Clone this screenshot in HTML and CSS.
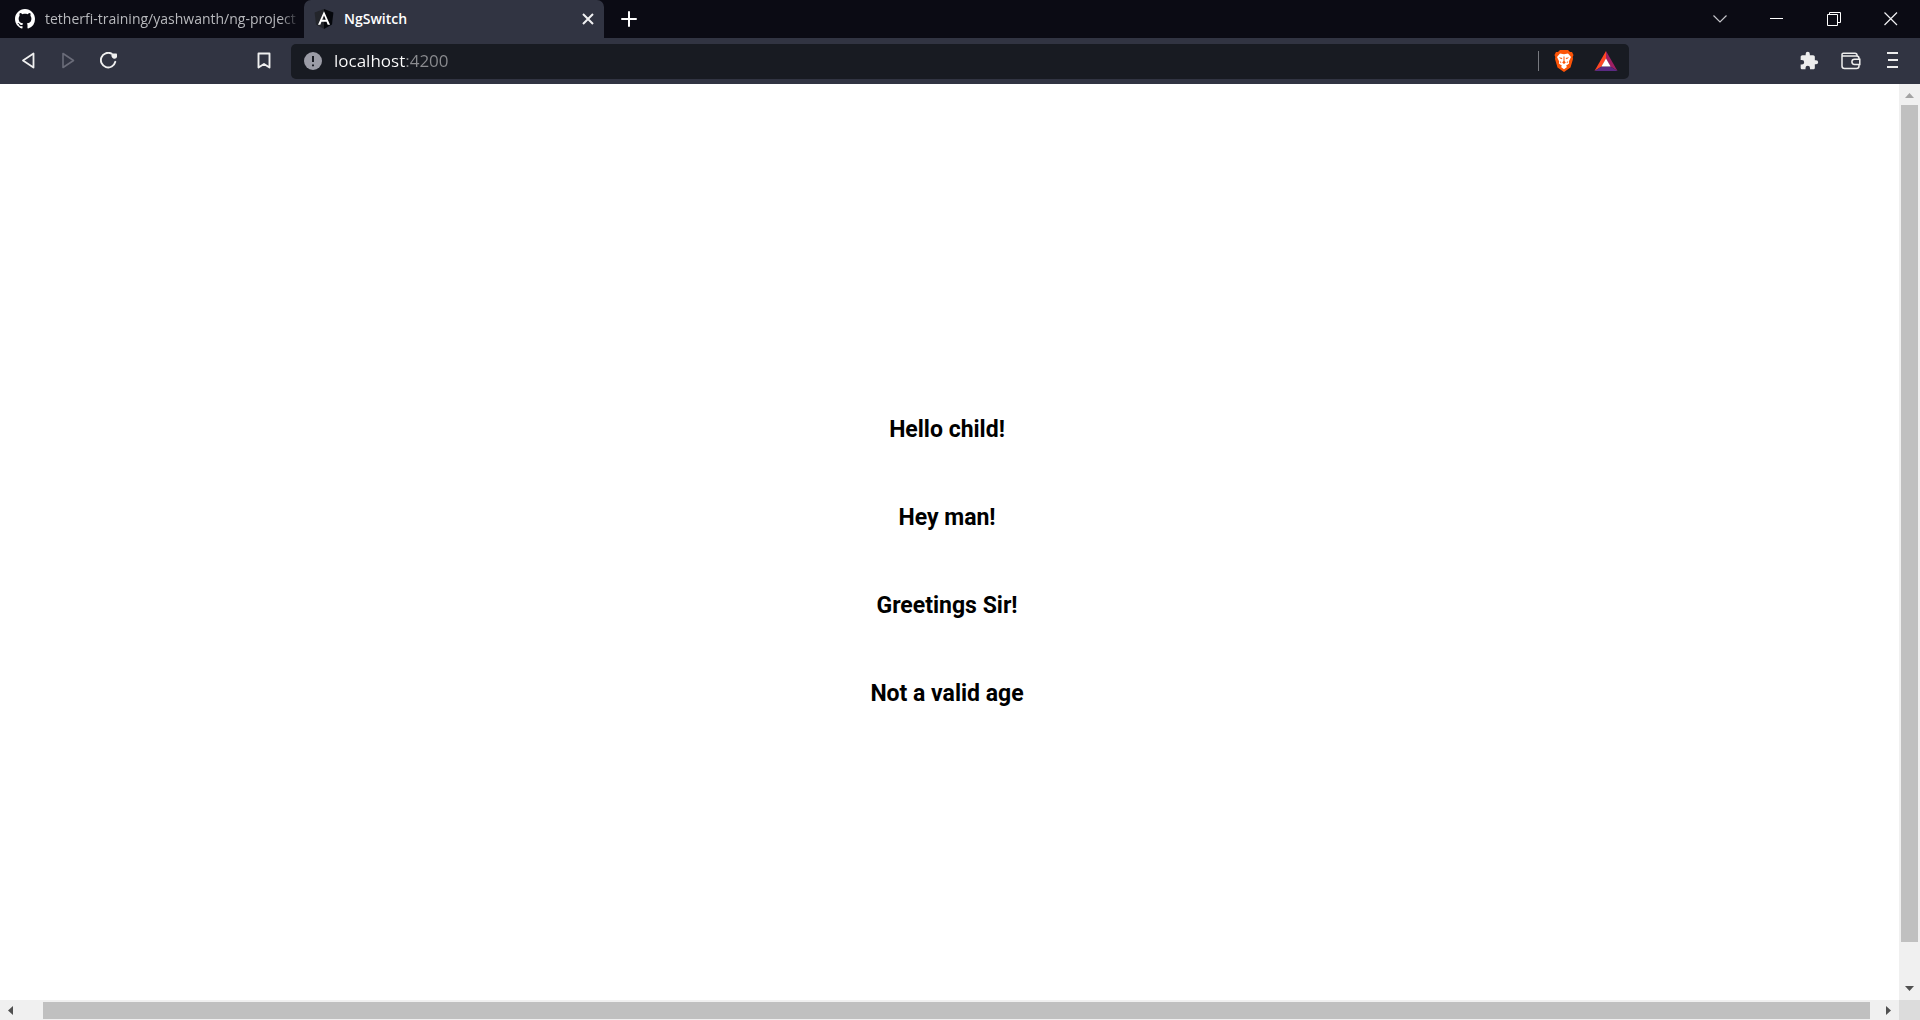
FILE: index.html
```html
<!DOCTYPE html>
<html lang="en">
<head>
<meta charset="utf-8">
<title>NgSwitch</title>
<link rel="stylesheet" href="styles.css">
</head>
<body>
<header>
  <div class="tabstrip">
    <button class="tab tab-idle">
      <svg class="favicon" viewBox="0 0 16 16" fill="#fff"><path d="M8 0C3.58 0 0 3.58 0 8c0 3.54 2.29 6.53 5.47 7.59.4.07.55-.17.55-.38 0-.19-.01-.82-.01-1.49-2.01.37-2.53-.49-2.69-.94-.09-.23-.48-.94-.82-1.13-.28-.15-.68-.52-.01-.53.63-.01 1.08.58 1.23.82.72 1.21 1.87.87 2.33.66.07-.52.28-.87.51-1.07-1.78-.2-3.64-.89-3.64-3.95 0-.87.31-1.59.82-2.15-.08-.2-.36-1.02.08-2.12 0 0 .67-.21 2.2.82.64-.18 1.32-.27 2-.27s1.36.09 2 .27c1.53-1.04 2.2-.82 2.2-.82.44 1.1.16 1.92.08 2.12.51.56.82 1.27.82 2.15 0 3.07-1.87 3.75-3.65 3.95.29.25.54.73.54 1.48 0 1.07-.01 1.93-.01 2.2 0 .21.15.46.55.38A8.01 8.01 0 0 0 16 8c0-4.42-3.58-8-8-8z"/></svg>
      <span class="tab-title">tetherfi-training/yashwanth/ng-project</span>
    </button>
    <div class="tab tab-active">
      <svg class="favicon" viewBox="0 0 20 20"><path fill="#23252b" d="M10 0L.6 3.4 2 15.6 10 20z"/><path fill="#05070c" d="M10 0l9.4 3.4L18 15.600 10 20z"/><path fill="#fff" fill-rule="evenodd" d="M10 2.200L4 15.700h2.300l1.200-3h5l1.200 3H16zM10 6.500l1.800 4.300H8.200z"/></svg>
      <span class="tab-title">NgSwitch</span>
      <button class="tab-close" aria-label="Close tab"><svg width="12" height="12" viewBox="0 0 12 12"><path d="M1 1l10 10M11 1L1 11" stroke="#f0f0f2" stroke-width="2"/></svg></button>
    </div>
    <button class="new-tab" aria-label="New tab"><svg width="16" height="16" viewBox="0 0 16 16"><path d="M8 1v14M1 8h14" stroke="#fff" stroke-width="2" stroke-linecap="round"/></svg></button>
    <div class="window-controls">
      <button aria-label="Search tabs"><svg width="14" height="14" viewBox="0 0 14 14"><path d="M.5 3.500L7 10 13.500 3.500" fill="none" stroke="#c4c4c9" stroke-width="1.200"/></svg></button>
      <button aria-label="Minimize"><svg width="14" height="14" viewBox="0 0 14 14"><path d="M0 6.500h13" stroke="#fff"/></svg></button>
      <button aria-label="Restore"><svg width="14" height="14" viewBox="0 0 14 14"><path d="M.5 2.500h10v11H.5zM2.500 2.500v-2h11v10h-3" fill="none" stroke="#fff"/></svg></button>
      <button aria-label="Close"><svg width="14" height="14" viewBox="0 0 14 14"><path d="M.5 .5L13 13M13 .5L.5 13" stroke="#f0f0f2" stroke-width="1.200"/></svg></button>
    </div>
  </div>
  <div class="toolbar">
    <button class="nav" aria-label="Back"><svg width="16" height="18" viewBox="0 0 16 18"><path d="M12.500 1.500v14L2 8.500z" fill="none" stroke="#f0f0f0" stroke-width="1.800" stroke-linejoin="round"/></svg></button>
    <button class="nav" aria-label="Forward" disabled><svg width="16" height="18" viewBox="0 0 16 18"><path d="M2 1.500v14l10.500-7z" fill="none" stroke="#6a6c79" stroke-width="1.600" stroke-linejoin="round"/></svg></button>
    <button class="nav" aria-label="Reload"><svg width="18" height="18" viewBox="0 0 18 18"><path d="M11.500 1.600A7.300 7.300 0 1 0 15.300 9.800" fill="none" stroke="#f0f0f0" stroke-width="1.900" stroke-linecap="round"/><path d="M11.500 1.500h4.700q.8 0 .8.800V5Q16.500 7 13.800 6.700 11 6 11.500 1.500z" fill="#f0f0f0"/></svg></button>
    <button class="nav bookmark" aria-label="Bookmark this page"><svg width="14" height="18" viewBox="0 0 14 18"><path d="M1.500 1.500h11v14L7 12 1.500 15.500z" fill="none" stroke="#f0f0f0" stroke-width="1.900" stroke-linejoin="round"/></svg></button>
    <div class="address">
      <svg width="18" height="18" viewBox="0 0 18 18"><circle cx="9" cy="9" r="9" fill="#9b9ca6"/><path d="M9 4v6M9 12.500v1.800" stroke="#181b22" stroke-width="2"/></svg>
      <input class="url" type="text" aria-label="Address" value="localhost:4200">
      <span class="divider"></span>
      <button class="shield" aria-label="Brave Shields"><svg width="20" height="22" viewBox="0 0 20 22"><path fill="#fb5408" d="M6 0h8l2 2h2l1.500 3-.8 2 .3 2-2.500 8.500L10 22l-6.500-4.500L1 9l.3-2-.8-2L2 2h2z"/><path fill="#fff" d="M6 3.500l4 .8 4-.8 3 3.500-2.200 4.500.3 2-3.100 2.200 1 1.300-3 2.200L7 17l1-1.300-3.100-2.200.3-2L3 7z"/><path fill="#fb5408" d="M4.800 7.200L8.500 8 7.300 9.200zM15.200 7.200L11.500 8l1.200 1.200zM9.500 6.500h1v4.500l1.300 1.500-1.800 1.400-1.800-1.400L9.500 11zM6 11l1.600 2-1.600-.5zM14 11l-1.600 2 1.600-.5z"/></svg></button>
      <button class="rewards" aria-label="Brave Rewards"><svg width="24" height="20" viewBox="0 0 24 20"><path fill="#ff4724" d="M12 0v8L7.500 15.500 .5 20z"/><path fill="#9e1f63" d="M12 0l11.500 20-7-4.500L12 8z"/><path fill="#5a2a82" d="M.5 20l7-4.500h9l7 4.500z"/><path fill="#fff" d="M12 7.500l4.600 8H7.400z"/></svg></button>
    </div>
    <div class="tools">
      <button aria-label="Extensions"><svg width="20" height="20" viewBox="0 0 24 24"><path fill="#ededed" d="M20.500 11H19V7c0-1.100-.9-2-2-2h-4V3.500a2.500 2.500 0 0 0-5 0V5H4c-1.100 0-2 .9-2 2v3.800h1.500a2.700 2.700 0 0 1 0 5.400H2V20c0 1.100.9 2 2 2h3.800v-1.500a2.700 2.700 0 0 1 5.400 0V22H17c1.100 0 2-.9 2-2v-4h1.500a2.500 2.500 0 0 0 0-5z"/></svg></button>
      <button aria-label="Wallet"><svg width="20" height="18" viewBox="0 0 20 18" fill="none" stroke="#ededed" stroke-width="1.500"><path d="M1 3.500V14q0 2.500 2.500 2.500h12Q18 16.500 18 14V6.500Q18 4 15.500 4H2Q1 4 1 3V2.500Q1 1.200 2.300 1.200H14q2 0 2.300 2.800"/><path d="M18.800 7.200h-5.300a2.600 2.600 0 0 0 0 5.200h5.300z" fill="#313442"/></svg></button>
      <button aria-label="Menu"><svg width="12" height="18" viewBox="0 0 12 18"><path d="M0 1h11M1 8h10M0 15h11" stroke="#ededed" stroke-width="2"/></svg></button>
    </div>
  </div>
</header>
<div class="viewport">
  <main>
    <h2>Hello child!</h2>
    <h2>Hey man!</h2>
    <h2>Greetings Sir!</h2>
    <h2>Not a valid age</h2>
  </main>
  <div class="scroll-y">
    <svg width="21" height="21" viewBox="0 0 21 21"><path d="M6 14h9L10.500 9z" fill="#a3a3a3"/></svg>
    <span class="thumb-y"></span><span class="rest-y"></span>
    <svg width="21" height="21" viewBox="0 0 21 21"><path d="M6 7h9l-4.500 5z" fill="#505050"/></svg>
  </div>
  <div class="scroll-x">
    <svg width="21" height="20" viewBox="0 0 21 20"><path d="M13 6v9l-5-4.500z" fill="#505050"/></svg>
    <span class="lead-x"></span><span class="thumb-x"></span><span class="rest-x"></span>
    <svg width="21" height="20" viewBox="0 0 21 20"><path d="M8 6v9l5-4.500z" fill="#505050"/></svg>
  </div>
  <div class="corner"></div>
</div>
</body>
</html>
```
FILE: styles.css
```css
* { box-sizing: border-box; }

body {
  margin: 0;
  height: 100vh;
  display: flex;
  flex-direction: column;
  background: #fff;
  font-family: "Open Sans", "Noto Sans", sans-serif;
}

svg { display: block; flex: none; }

button {
  display: flex;
  align-items: center;
  justify-content: center;
  flex: none;
  padding: 0;
  border: 0;
  background: none;
  color: inherit;
  font: inherit;
}

.tabstrip {
  display: flex;
  height: 38px;
  background: #0b0b14;
}

.tab {
  display: flex;
  align-items: center;
  justify-content: flex-start;
  gap: 10px;
  font-size: 14px;
  line-height: 20px;
}

.tab-idle {
  width: 304px;
  padding: 0 4px 0 15px;
  color: #b8b9bd;
}

.tab-idle .tab-title {
  flex: 1;
  overflow: hidden;
  white-space: nowrap;
  text-align: left;
  mask-image: linear-gradient(to left, transparent, #000 20px);
}

.tab-active {
  width: 300px;
  padding: 0 6px 0 10px;
  border-radius: 7px 7px 0 0;
  background: #313442;
  color: #fff;
  font-weight: 600;
}

.tab-active .tab-title { flex: 1; }

.favicon { width: 20px; height: 20px; }

.tab-close { width: 20px; height: 20px; }

.new-tab { width: 50px; }

.window-controls {
  display: flex;
  margin-left: auto;
  padding-right: 1px;
}

.window-controls button { width: 57px; }

.toolbar {
  display: flex;
  align-items: center;
  height: 46px;
  padding: 0 6px 0 9px;
  background: #313442;
}

.nav { width: 40px; height: 36px; }

.bookmark { margin: 0 7px 0 115px; }

.address {
  display: flex;
  align-items: center;
  flex: 1;
  height: 35px;
  padding: 0 2px 0 13px;
  border-radius: 5px;
  background: #181b22;
}

.url {
  flex: 1;
  min-width: 0;
  height: 24px;
  margin-left: 12px;
  padding: 0;
  border: 0;
  outline: 0;
  background: linear-gradient(to right, #fff 71px, #8b8c90 71px);
  background-clip: text;
  color: #fff;
  -webkit-text-fill-color: transparent;
  font-family: inherit;
  font-size: 17px;
  line-height: 24px;
}

.divider {
  width: 1px;
  height: 20px;
  margin-right: 4px;
  background: #77797f;
}

.shield, .rewards { width: 42px; height: 32px; }

.tools {
  display: flex;
  margin-left: 159px;
}

.tools button { width: 42px; height: 36px; }

.viewport {
  flex: 1;
  min-height: 0;
  display: grid;
  grid-template: 1fr 20px / 1fr 21px;
}

main {
  display: flex;
  flex-direction: column;
  align-items: center;
  justify-content: center;
  gap: 60px;
  padding: 40px 5px 0 0;
}

h2 {
  margin: 0;
  color: #000;
  font: bold 23px/28px Roboto, sans-serif;
}

.scroll-y, .scroll-x {
  display: flex;
  background: #f0f0f0;
}

.scroll-y { flex-direction: column; }

.thumb-y { flex: 837; margin: 0 2px; background: #c0c0c0; }
.rest-y { flex: 37; }

.lead-x { width: 22px; }
.thumb-x { flex: 1; margin: 2px 0 1px; background: #c0c0c0; }
.rest-x { width: 8px; }

.corner { background: #dcdcdc; }
```
